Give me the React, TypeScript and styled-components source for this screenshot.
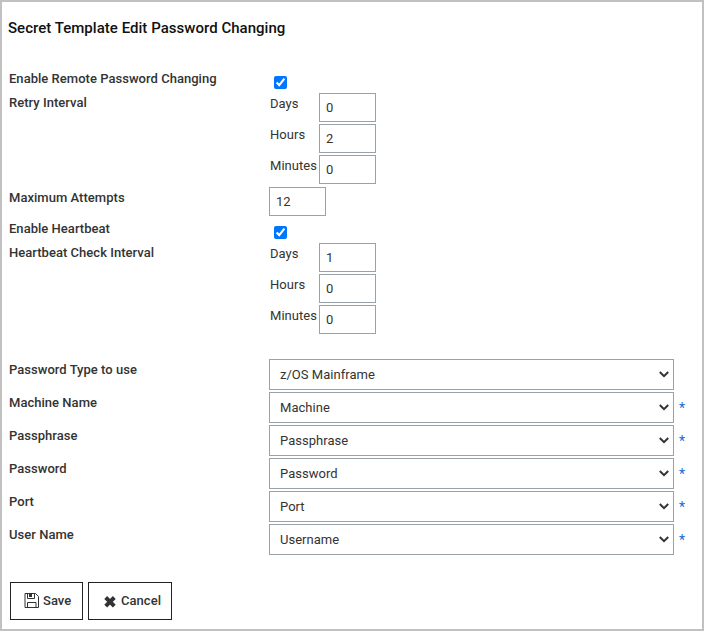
import React from "react";
import styled, { createGlobalStyle } from "styled-components";

const GlobalStyle = createGlobalStyle`
  *, *::before, *::after { box-sizing: border-box; }
  body {
    margin: 0;
    background: #fff;
    color: #333;
    font: 400 13px/18px Roboto, "Liberation Sans", sans-serif;
    letter-spacing: 0.03px;
  }
`;

const Frame = styled.main`
  width: 704px;
  height: 631px;
  border: 2px solid #c1c1c1;
  padding: 16px 0 0 6px;
  overflow: hidden;
`;

const Title = styled.h1`
  margin: 0 0 31px;
  font-size: 15px;
  line-height: 20px;
  font-weight: 500;
  letter-spacing: 0.03px;
  color: #111;
`;

const Row = styled.div<{ $height: number }>`
  display: grid;
  grid-template-columns: 260px 1fr;
  align-items: start;
  height: ${(p) => p.$height}px;
  padding-left: 1px;
`;

const Label = styled.label<{ $drop?: boolean }>`
  padding-top: ${(p) => (p.$drop ? 2 : 1)}px;
  font-weight: 500;
`;

const Checkbox = styled.input`
  width: 13px;
  height: 13px;
  margin: 7px 0 0 5px;
`;

const Interval = styled.div`
  display: grid;
  grid-template-columns: 50px 57px;
  row-gap: 2px;
`;

const Unit = styled.span`
  padding: 2px 0 0 1px;
  white-space: nowrap;
`;

const NumberBox = styled.input`
  width: 57px;
  height: 29px;
  border: 1px solid #98a2ab;
  border-radius: 0;
  padding: 0 6px;
  background: #fff;
  color: #333;
  font: inherit;
  letter-spacing: inherit;
`;

const Choice = styled.div`
  display: flex;
  align-items: center;
  gap: 5px;
`;

const SelectWrap = styled.div`
  position: relative;
  display: flex;
`;

const Chevron = styled.svg`
  position: absolute;
  right: 5px;
  top: 12px;
  pointer-events: none;
`;

const Select = styled.select`
  appearance: none;
  width: 405px;
  height: 31px;
  border: 1px solid #98a2ab;
  border-radius: 0;
  padding: 0 20px 0 10px;
  background: #fff;
  color: #333;
  font: inherit;
  letter-spacing: inherit;
`;

const Required = styled.span`
  color: #2467d8;
  font-size: 14px;
`;

const Spacer = styled.div<{ $height: number }>`
  height: ${(p) => p.$height}px;
`;

const Actions = styled.div`
  display: flex;
  gap: 5px;
  padding-left: 2px;
`;

const Button = styled.button<{ $width: number; $inset: number; $gap: number }>`
  display: flex;
  align-items: center;
  justify-content: flex-start;
  gap: ${(p) => p.$gap}px;
  width: ${(p) => p.$width}px;
  height: 38px;
  padding: 0 0 0 ${(p) => p.$inset}px;
  border: 1px solid #222;
  border-radius: 0;
  background: #fff;
  color: #333;
  font: inherit;
  font-weight: 500;
  letter-spacing: inherit;
`;

const SaveIcon = () => (
  <svg width="15" height="16" viewBox="0 0 15 16" fill="none" stroke="#333">
    <path d="M1 .5h10.5l3 3v11H1z" />
    <path d="M3.5 14.5v-5h8.5v5M3.5.5v5h7v-5" />
    <path d="M5 1h3v3H5z" fill="#333" stroke="none" />
  </svg>
);

const CancelIcon = () => (
  <svg width="12" height="13" viewBox="0 0 12 13" stroke="#333" strokeWidth="4">
    <path d="M1.7 2.5l8.6 8.6M10.3 2.5l-8.6 8.6" />
  </svg>
);

const IntervalFields = ({ values }: { values: string[] }) => (
  <Interval>
    {["Days", "Hours", "Minutes"].map((unit, i) => (
      <React.Fragment key={unit}>
        <Unit>{unit}</Unit>
        <NumberBox aria-label={unit} defaultValue={values[i]} />
      </React.Fragment>
    ))}
  </Interval>
);

const choices = [
  { label: "Password Type to use", value: "z/OS Mainframe", required: false },
  { label: "Machine Name", value: "Machine", required: true },
  { label: "Passphrase", value: "Passphrase", required: true },
  { label: "Password", value: "Password", required: true },
  { label: "Port", value: "Port", required: true },
  { label: "User Name", value: "Username", required: true },
];

export default function App() {
  return (
    <>
      <GlobalStyle />
      <Frame>
        <Title>Secret Template Edit Password Changing</Title>
        <Row $height={24}>
          <Label>Enable Remote Password Changing</Label>
          <Checkbox type="checkbox" defaultChecked />
        </Row>
        <Row $height={94}>
          <Label>Retry Interval</Label>
          <IntervalFields values={["0", "2", "0"]} />
        </Row>
        <Row $height={32}>
          <Label $drop>Maximum Attempts</Label>
          <NumberBox defaultValue="12" />
        </Row>
        <Row $height={24}>
          <Label>Enable Heartbeat</Label>
          <Checkbox type="checkbox" defaultChecked />
        </Row>
        <Row $height={91}>
          <Label>Heartbeat Check Interval</Label>
          <IntervalFields values={["1", "0", "0"]} />
        </Row>
        <Spacer $height={25} />
        {choices.map((c) => (
          <Row $height={33} key={c.label}>
            <Label $drop>{c.label}</Label>
            <Choice>
              <SelectWrap>
                <Select defaultValue={c.value}>
                  <option>{c.value}</option>
                </Select>
                <Chevron width="10" height="7" viewBox="0 0 10 7" fill="none" stroke="#333" strokeWidth="2">
                  <path d="M.8 1L5 5.2 9.2 1" />
                </Chevron>
              </SelectWrap>
              {c.required && <Required>*</Required>}
            </Choice>
          </Row>
        ))}
        <Spacer $height={25} />
        <Actions>
          <Button $width={73} $inset={13} $gap={4}>
            <SaveIcon />
            Save
          </Button>
          <Button $width={84} $inset={15} $gap={5}>
            <CancelIcon />
            Cancel
          </Button>
        </Actions>
      </Frame>
    </>
  );
}
